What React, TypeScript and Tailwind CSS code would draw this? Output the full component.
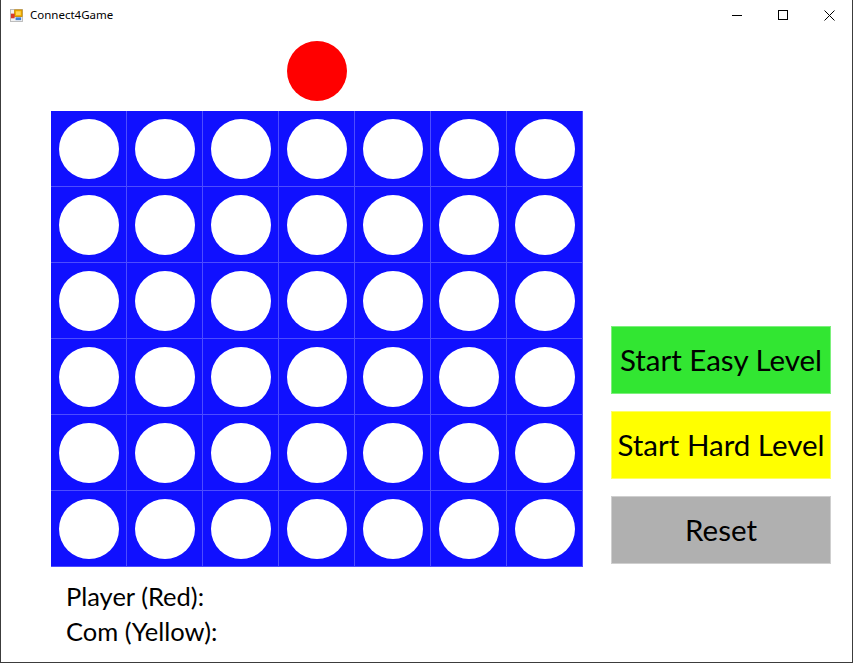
import React from 'react';

const ROWS = 6;
const COLS = 7;

function FormIcon() {
  return (
    <svg width="13" height="13" viewBox="0 0 14 14" className="shrink-0">
      <rect x="0.5" y="0.5" width="13" height="13" fill="#f2f2f2" stroke="#b8b8b8" />
      <rect x="5" y="1" width="8" height="7" fill="#f5b400" stroke="#c98a00" strokeWidth="1" />
      <rect x="6.5" y="2.5" width="5" height="4" fill="#ffd75a" />
      <rect x="1" y="5" width="4" height="5" fill="#d83a2a" />
      <rect x="6" y="9" width="6" height="3" fill="#3f7fd6" />
    </svg>
  );
}

function TitleBar() {
  return (
    <div className="h-[30px] flex items-center bg-white">
      <div className="pl-[9px] pr-[7px] flex items-center">
        <FormIcon />
      </div>
      <span className="text-[11.5px] text-black font-['Noto_Sans','Liberation_Sans',sans-serif] leading-none">
        Connect4Game
      </span>
      <div className="ml-auto flex h-full">
        <div className="w-[46px] h-full flex items-center justify-center">
          <svg width="10" height="10" viewBox="0 0 10 10">
            <line x1="0" y1="5.5" x2="10" y2="5.5" stroke="#000" strokeWidth="1" />
          </svg>
        </div>
        <div className="w-[46px] h-full flex items-center justify-center">
          <svg width="10" height="10" viewBox="0 0 10 10">
            <rect x="0.5" y="0.5" width="9" height="9" fill="none" stroke="#000" strokeWidth="1" />
          </svg>
        </div>
        <div className="w-[46px] h-full flex items-center justify-center">
          <svg width="11" height="11" viewBox="0 0 11 11">
            <line x1="0.5" y1="0.5" x2="10.5" y2="10.5" stroke="#000" strokeWidth="1" />
            <line x1="10.5" y1="0.5" x2="0.5" y2="10.5" stroke="#000" strokeWidth="1" />
          </svg>
        </div>
      </div>
    </div>
  );
}

export default function App() {
  // column where the player's next chip hovers
  const hoverCol = 3;

  return (
    <div className="w-[853px] h-[663px] bg-white border-l border-r border-b border-[#3c3c3c] overflow-hidden flex flex-col">
      <TitleBar />

      <div className="flex flex-1">
        {/* Board column */}
        <div className="pl-[50px]">
          {/* Chip drop row */}
          <div className="flex h-[60px] mt-[11px] mb-[10px]">
            {Array.from({ length: COLS }).map((_, c) => (
              <div key={c} className="w-[76px] pl-[8px]">
                {c === hoverCol && <div className="w-[60px] h-[60px] rounded-full bg-[#ff0000]" />}
              </div>
            ))}
          </div>

          {/* Board */}
          <div className="grid grid-cols-7 w-[532px] bg-[#1010ff]">
            {Array.from({ length: ROWS * COLS }).map((_, i) => (
              <div key={i} className="w-[76px] h-[76px] border-r border-b border-[#4c4cff]">
                <div className="w-[60px] h-[60px] rounded-full bg-white ml-[8px] mt-[8px]" />
              </div>
            ))}
          </div>

          {/* Scores */}
          <div className="mt-[12px] pl-[15px] font-['Lato','Noto_Sans',sans-serif] text-[25.5px] leading-[35px] text-black">
            <p>Player (Red):</p>
            <p>Com (Yellow):</p>
          </div>
        </div>

        {/* Controls */}
        <div className="pl-[28px] pt-[296px] flex flex-col gap-[17px] font-['Lato','Noto_Sans',sans-serif] text-[29.5px] text-black">
          <button className="w-[220px] h-[68px] bg-[#32e632] border border-[#7cf07c] flex items-center justify-center">
            Start Easy Level
          </button>
          <button className="w-[220px] h-[68px] bg-[#ffff00] border border-[#ffff66] flex items-center justify-center">
            Start Hard Level
          </button>
          <button className="w-[220px] h-[68px] bg-[#b0b0b0] border border-[#cfcfcf] flex items-center justify-center">
            Reset
          </button>
        </div>
      </div>
    </div>
  );
}
